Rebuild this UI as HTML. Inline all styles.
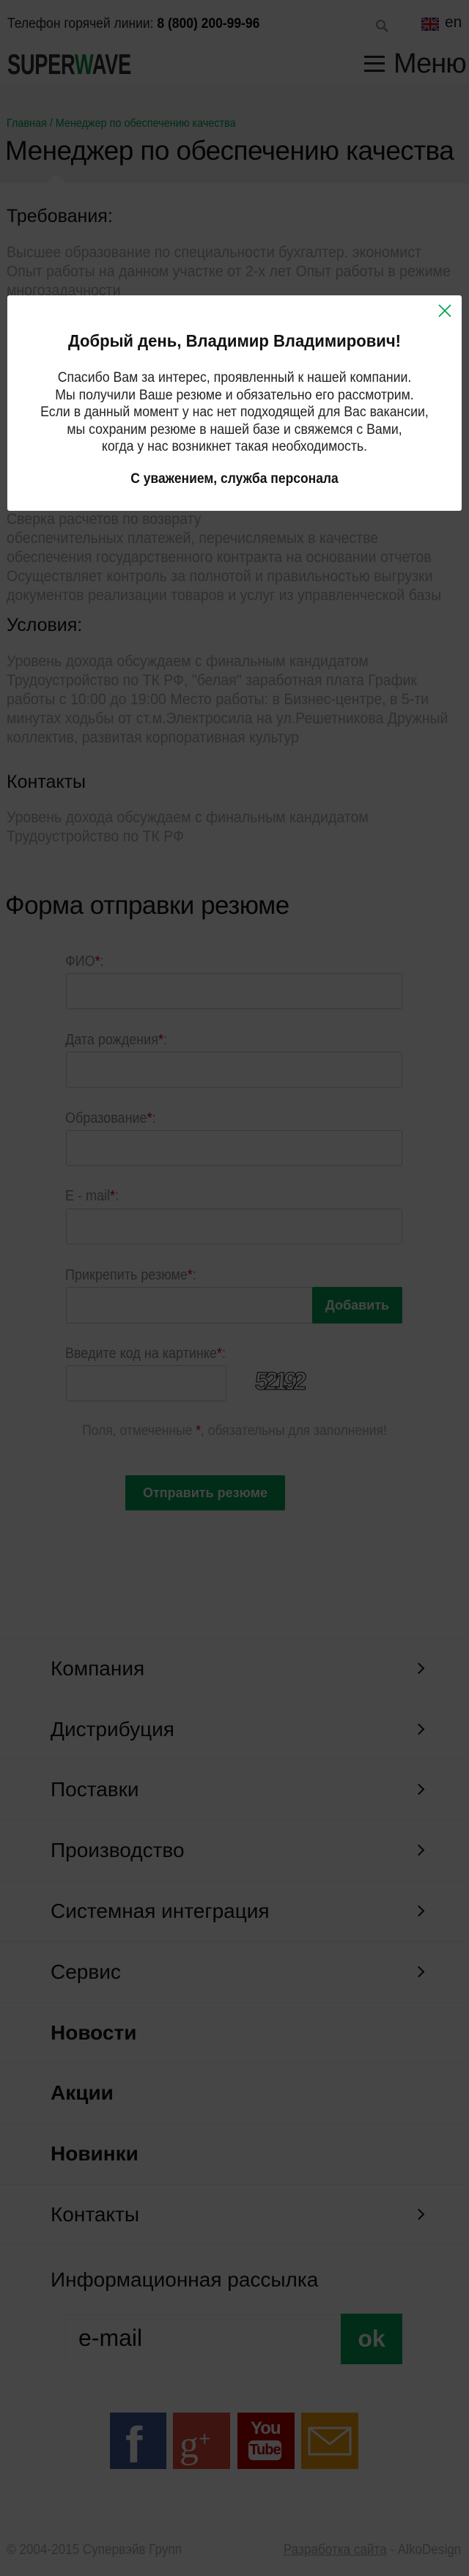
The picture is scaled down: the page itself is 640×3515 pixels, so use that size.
<!DOCTYPE html>
<html><head><meta charset="utf-8">
<style>
*{margin:0;padding:0;box-sizing:border-box}
html,body{width:640px;height:3515px;overflow:hidden}
body{position:relative;background:#fff;font-family:"Liberation Sans","Noto Sans CJK SC",sans-serif;color:#222}
.a{position:absolute;white-space:nowrap}
.sx{transform:scaleX(.88);transform-origin:left top}
.hdr{position:absolute;left:0;top:0;width:640px;height:115px;background:#f6f6f6}
.ttl{position:absolute;left:0;top:115px;width:640px;height:135px;background:#efefef}
.tri{position:absolute;left:64px;top:237px;width:0;height:0;border-left:13px solid transparent;border-right:13px solid transparent;border-bottom:13px solid #fff}
.body{font-size:21px;color:#aaa;line-height:26px;transform:scaleX(.93);transform-origin:left top}
.h3{font-size:25px;color:#111}
.lbl{font-size:20px;color:#888;transform:scaleX(.9);transform-origin:left top}
.lbl b{color:#d00;font-weight:normal}
.inp{position:absolute;border:1px solid #ccc;border-radius:3px;background:#fff}
.btn{position:absolute;background:#00a05a;color:#fff;font-size:18px;font-weight:bold;display:flex;align-items:center;justify-content:center;border-radius:2px}
.row{position:absolute;left:0;width:640px;height:83px;border-top:1px solid #eee}
.row span{position:absolute;left:69px;top:25px;font-size:28px;font-weight:300;color:#111}
.row span.bd{font-weight:bold}
.row i{position:absolute;left:566px;top:35px;width:11px;height:11px;border-right:2px solid #111;border-top:2px solid #111;transform:rotate(45deg)}
.ov{position:absolute;left:0;top:0;width:640px;height:3515px;background:rgba(0,0,0,.725)}
.modal{position:absolute;left:10px;top:403px;width:620px;height:294px;background:#fff;border-radius:3px;text-align:center}
</style></head><body>
<div class="hdr"></div>
<div class="a sx" style="left:10px;top:22px;font-size:19px;color:#222;transform:scaleX(.92)">Телефон горячей линии: <b style="color:#000">8 (800) 200-99-96</b></div>
<svg class="a" style="left:512px;top:26px" width="20" height="18" viewBox="0 0 20 18"><circle cx="7.5" cy="7.5" r="5.5" fill="none" stroke="#888" stroke-width="2"/><path d="M11.5 11.5L17 17" stroke="#888" stroke-width="2.5"/></svg>
<svg class="a" style="left:575px;top:24px" width="24" height="18" viewBox="0 0 60 45"><rect width="60" height="45" fill="#012169"/><path d="M0 0L60 45M60 0L0 45" stroke="#fff" stroke-width="9"/><path d="M0 0L60 45M60 0L0 45" stroke="#c8102e" stroke-width="4"/><path d="M30 0V45M0 22.5H60" stroke="#fff" stroke-width="14"/><path d="M30 0V45M0 22.5H60" stroke="#c8102e" stroke-width="8"/></svg>
<div class="a" style="left:607px;top:19px;font-size:21px;color:#222">en</div>
<div class="a" style="left:10px;top:69px;font-weight:bold;font-size:39px;letter-spacing:-.5px;color:#2e2e2e;transform:scaleX(.7);transform-origin:left top;line-height:40px">SUPER<span style="color:#0a8a3a">W</span>AVE</div>
<div class="a" style="left:497px;top:76px;width:28px;height:22px;border-top:3px solid #222;border-bottom:3px solid #222"></div>
<div class="a" style="left:497px;top:85px;width:28px;height:3px;background:#222"></div>
<div class="a" style="left:537px;top:66px;font-size:38px;font-weight:300;color:#222;letter-spacing:-1px">Меню</div>
<div class="ttl"></div><div class="tri"></div>
<div class="a" style="left:9px;top:160px;font-size:16px;color:#00a050;transform:scaleX(.9);transform-origin:left top">Главная / Менеджер по обеспечению качества</div>
<div class="a" style="left:7px;top:185px;font-size:37px;color:#111;letter-spacing:-.6px">Менеджер по обеспечению качества</div>
<div class="a h3" style="left:9px;top:281px">Требования:</div>
<div class="a body" style="left:9px;top:332px">Высшее образование по специальности бухгалтер. экономист<br>Опыт работы на данном участке от 2-х лет Опыт работы в режиме<br>многозадачности<br>Контроль за правильностью отражения поступлений и<br>начислений в учете<br>.<br>.<br>.<br>.<br>.<br>.<br>.<br>.<br>.<br>Сверка расчетов по возврату<br>обеспечительных платежей, перечисляемых в качестве<br>обеспечения государственного контракта на основании отчетов<br>Осуществляет контроль за полнотой и правильностью выгрузки<br>документов реализации товаров и услуг из управленческой базы</div>
<div class="a h3" style="left:9px;top:839px">Условия:</div>
<div class="a body" style="left:9px;top:890px">Уровень дохода обсуждаем с финальным кандидатом<br>Трудоустройство по ТК РФ, "белая" заработная плата График<br>работы с 10:00 до 19:00 Место работы: в Бизнес-центре, в 5-ти<br>минутах ходьбы от ст.м.Электросила на ул.Решетникова Дружный<br>коллектив, развитая корпоративная культур</div>
<div class="a h3" style="left:9px;top:1053px">Контакты</div>
<div class="a body" style="left:9px;top:1103px">Уровень дохода обсуждаем с финальным кандидатом<br>Трудоустройство по ТК РФ</div>
<div class="a" style="left:7px;top:1216px;font-size:35px;color:#111;letter-spacing:-.5px">Форма отправки резюме</div>
<div class="a lbl" style="left:89px;top:1301px">ФИО<b>*</b>:</div><div class="inp" style="left:90px;top:1328px;width:459px;height:49px"></div>
<div class="a lbl" style="left:89px;top:1408px">Дата рождения<b>*</b>:</div><div class="inp" style="left:90px;top:1435px;width:459px;height:49px"></div>
<div class="a lbl" style="left:89px;top:1515px">Образование<b>*</b>:</div><div class="inp" style="left:90px;top:1542px;width:459px;height:49px"></div>
<div class="a lbl" style="left:89px;top:1621px">E - mail<b>*</b>:</div><div class="inp" style="left:90px;top:1649px;width:459px;height:49px"></div>
<div class="a lbl" style="left:89px;top:1729px">Прикрепить резюме<b>*</b>:</div><div class="inp" style="left:90px;top:1756px;width:459px;height:50px"></div>
<div class="btn" style="left:426px;top:1756px;width:123px;height:50px">Добавить</div>
<div class="a lbl" style="left:89px;top:1836px">Введите код на картинке<b>*</b>:</div><div class="inp" style="left:90px;top:1863px;width:219px;height:49px"></div>
<div class="a" style="left:348px;top:1866px;font-size:34px;font-weight:bold;letter-spacing:-6px;color:#fff;-webkit-text-stroke:1px #111;transform:skewX(-4deg)">52192</div>
<div class="a" style="left:0;width:640px;text-align:center;top:1942px;font-size:19px;color:#aaa;transform:scaleX(.92);transform-origin:320px 0">Поля, отмеченные <span style="color:#d00">*</span>, обязательны для заполнения!</div>
<div class="btn" style="left:171px;top:2013px;width:218px;height:48px">Отправить резюме</div>
<div class="row" style="top:2235px"><span>Компания</span><i></i></div>
<div class="row" style="top:2318px"><span>Дистрибуция</span><i></i></div>
<div class="row" style="top:2400px"><span>Поставки</span><i></i></div>
<div class="row" style="top:2483px"><span>Производство</span><i></i></div>
<div class="row" style="top:2566px"><span>Системная интеграция</span><i></i></div>
<div class="row" style="top:2649px"><span>Сервис</span><i></i></div>
<div class="row" style="top:2732px"><span class="bd">Новости</span></div>
<div class="row" style="top:2814px"><span class="bd">Акции</span></div>
<div class="row" style="top:2897px"><span class="bd">Новинки</span></div>
<div class="row" style="top:2980px;border-bottom:1px solid #eee"><span>Контакты</span><i></i></div>
<div class="a" style="left:69px;top:3095px;font-size:28px;font-weight:300;color:#111">Информационная рассылка</div>
<div class="inp" style="left:89px;top:3158px;width:378px;height:67px;border-color:#eee;border-radius:0"></div>
<div class="a" style="left:107px;top:3172px;font-size:32px;color:#111">e-mail</div>
<div class="btn" style="left:465px;top:3157px;width:84px;height:69px;font-size:32px;border-radius:0">ok</div>
<div class="a" style="left:150px;top:3292px;width:77px;height:77px;background:#3b5998"></div>
<div class="a" style="left:171px;top:3300px;font-weight:bold;font-size:70px;color:#fff;line-height:72px">f</div>
<div class="a" style="left:236px;top:3292px;width:78px;height:77px;background:#dd4b39"></div>
<div class="a" style="left:245px;top:3302px;font-family:'Liberation Serif',serif;font-size:52px;color:#fff;line-height:52px">g<span style="font-family:'Liberation Sans',sans-serif;font-size:28px;vertical-align:16px">+</span></div>
<div class="a" style="left:324px;top:3292px;width:78px;height:77px;background:#b00"></div>
<div class="a" style="left:342px;top:3301px;font-weight:bold;font-size:24px;color:#fff;line-height:26px;letter-spacing:-1px">You</div>
<div class="a" style="left:339px;top:3330px;width:45px;height:27px;background:#fff;border-radius:6px;color:#b00;font-weight:bold;font-size:20px;line-height:27px;text-align:center;letter-spacing:-1px">Tube</div>
<div class="a" style="left:411px;top:3292px;width:78px;height:77px;background:#f39c12"></div>
<svg class="a" style="left:420px;top:3311px" width="60" height="40" viewBox="0 0 60 40"><rect x="2" y="2" width="56" height="36" fill="none" stroke="#fff" stroke-width="3"/><path d="M2 2L30 24L58 2" fill="none" stroke="#fff" stroke-width="3"/></svg>
<div class="a" style="left:9px;top:3469px;font-size:19px;color:#aaa;transform:scaleX(.9);transform-origin:left top">© 2004-2015 Супервэйв Групп</div>
<div class="a" style="right:11px;top:3469px;font-size:19px;color:#aaa;transform:scaleX(.9);transform-origin:right top"><u>Разработка сайта</u> - AlkoDesign</div>
<div class="ov"></div>
<div class="modal">
<svg style="position:absolute;right:14px;top:12px" width="18" height="18" viewBox="0 0 18 18"><path d="M1 1L17 17M17 1L1 17" stroke="#00a050" stroke-width="1.6"/></svg>
<div style="position:absolute;left:0;width:620px;top:49px;font-size:23px;font-weight:bold;color:#111;transform:scaleX(.96)">Добрый день, Владимир Владимирович!</div>
<div style="position:absolute;left:0;width:620px;top:101px;font-size:19px;line-height:23.6px;color:#222;transform:scaleX(.93)">Спасибо Вам за интерес, проявленный к нашей компании.<br>Мы получили Ваше резюме и обязательно его рассмотрим.<br>Если в данный момент у нас нет подходящей для Вас вакансии,<br>мы сохраним резюме в нашей базе и свяжемся с Вами,<br>когда у нас возникнет такая необходимость.</div>
<div style="position:absolute;left:0;width:620px;top:240px;font-size:19px;font-weight:bold;color:#111;transform:scaleX(.92)">С уважением, служба персонала</div>
</div>
</body></html>
